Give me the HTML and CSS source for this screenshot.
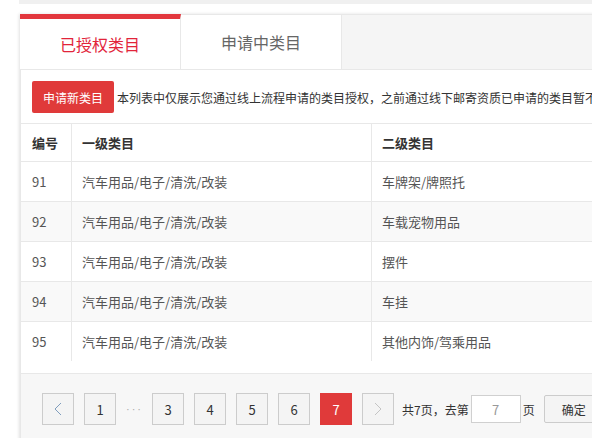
FILE: index.html
```html
<!DOCTYPE html>
<html lang="zh-CN">
<head>
<meta charset="utf-8">
<title>类目管理</title>
<link rel="stylesheet" href="styles.css">
</head>
<body>
<div class="topstrip"></div>
<div class="panel">
  <div class="tabs">
    <div class="tab tab-active">已授权类目</div>
    <div class="tab">申请中类目</div>
    <div class="tab-fill"></div>
  </div>
  <div class="content">
    <div class="toolbar">
      <button class="btn-primary">申请新类目</button>
      <span class="notice">本列表中仅展示您通过线上流程申请的类目授权，之前通过线下邮寄资质已申请的类目暂不在此列表中展示</span>
    </div>
    <table class="grid">
      <colgroup>
        <col class="c-num">
        <col class="c-first">
        <col class="c-second">
      </colgroup>
      <thead>
        <tr><th>编号</th><th>一级类目</th><th>二级类目</th></tr>
      </thead>
      <tbody>
        <tr><td>91</td><td>汽车用品/电子/清洗/改装</td><td>车牌架/牌照托</td></tr>
        <tr class="alt"><td>92</td><td>汽车用品/电子/清洗/改装</td><td>车载宠物用品</td></tr>
        <tr><td>93</td><td>汽车用品/电子/清洗/改装</td><td>摆件</td></tr>
        <tr class="alt"><td>94</td><td>汽车用品/电子/清洗/改装</td><td>车挂</td></tr>
        <tr class="last"><td>95</td><td>汽车用品/电子/清洗/改装</td><td>其他内饰/驾乘用品</td></tr>
      </tbody>
    </table>
    <div class="pager">
      <span class="pg pg-arrow"><svg width="8" height="14" viewBox="0 0 8 14"><path d="M7 1 L1 7 L7 13" fill="none" stroke="#7f9dbd" stroke-width="1"/></svg></span>
      <span class="pg">1</span>
      <span class="pg-dots">···</span>
      <span class="pg">3</span>
      <span class="pg">4</span>
      <span class="pg">5</span>
      <span class="pg">6</span>
      <span class="pg pg-cur">7</span>
      <span class="pg pg-arrow"><svg width="8" height="14" viewBox="0 0 8 14"><path d="M1 1 L7 7 L1 13" fill="none" stroke="#c4c4c4" stroke-width="1"/></svg></span>
      <span class="pg-text">共7页，去第</span>
      <span class="pg-input">7</span>
      <span class="pg-text pg-unit">页</span>
      <span class="pg-btn">确定</span>
    </div>
  </div>
</div>
</body>
</html>
```

FILE: styles.css
```css
html, body {
  margin: 0;
  padding: 0;
  background: #fff;
  overflow: hidden;
  font-family: "Microsoft YaHei", "Noto Sans CJK SC", "Noto Sans", sans-serif;
  color: #333;
}

.topstrip {
  margin-left: 19px;
  height: 4px;
  background: #f0f0f0;
}

.panel {
  margin: 10px 0 0 20px;
  width: 700px;
  box-shadow: -1px 0 3px rgba(0, 0, 0, 0.12);
  background: #fff;
}

.tabs {
  display: flex;
  height: 54px;
  border-top: 1px solid #e8e8e8;
  border-bottom: 1px solid #e8e8e8;
  background: #f5f5f5;
}

.tab {
  width: 160px;
  background: #fff;
  border-right: 1px solid #e8e8e8;
  display: flex;
  align-items: center;
  justify-content: center;
  font-size: 16px;
  color: #666;
}

.tab-active {
  margin-top: -1px;
  border-top: 5px solid #e2373d;
  color: #e2243a;
  height: 50px;
}

.tab-fill {
  flex: 1;
}

.content {
  border-left: 1px solid #e8e8e8;
}

.toolbar {
  display: flex;
  align-items: center;
  padding: 11px 0 10px 11px;
  white-space: nowrap;
  overflow: hidden;
}

.btn-primary {
  flex: none;
  height: 32px;
  width: 82px;
  border: none;
  border-radius: 2px;
  background: #e03a3a;
  color: #fff;
  font-family: inherit;
  font-size: 12px;
  padding: 0;
  margin: 0 3px 0 0;
}

.notice {
  font-size: 12px;
  color: #333;
}

.grid {
  border-collapse: separate;
  border-spacing: 0;
  table-layout: fixed;
  width: 679px;
  border-top: 1px solid #e8e8e8;
}

.c-num { width: 51px; }
.c-first { width: 300px; }

.grid th,
.grid td {
  text-align: left;
  font-size: 13px;
  padding: 0 0 0 10px;
  border-bottom: 1px solid #e8e8e8;
  white-space: nowrap;
}

.grid th:first-child,
.grid td:first-child {
  padding-left: 11px;
}

.grid th:nth-child(-n+2),
.grid td:nth-child(-n+2) {
  border-right: 1px solid #e8e8e8;
}

.grid th {
  height: 37px;
  font-weight: bold;
  color: #333;
}

.grid td {
  height: 39px;
  color: #555;
}

.grid tr.alt td {
  background: #f9f9f9;
}

.grid tr.last td {
  border-bottom: none;
}

.pager {
  margin-top: 12px;
  border-top: 1px solid #e8e8e8;
  background: #f7f7f7;
  padding: 15px 0 20px 21px;
  display: flex;
  align-items: center;
  height: 40px;
  white-space: nowrap;
}

.pg {
  flex: none;
  box-sizing: border-box;
  width: 32px;
  height: 32px;
  border: 1px solid #cccccc;
  background: #f4f4f4;
  display: flex;
  align-items: center;
  justify-content: center;
  font-size: 13px;
  color: #333;
  margin-right: 10px;
}

.pg-cur {
  background: #e03a3a;
  border-color: #e03a3a;
  color: #fff;
}

.pg-dots {
  flex: none;
  width: 16px;
  margin-right: 10px;
  font-family: "Liberation Sans", sans-serif;
  font-size: 11px;
  color: #aaa;
  letter-spacing: 2px;
  text-align: center;
  white-space: nowrap;
}

.pg-text {
  flex: none;
  font-size: 12px;
  color: #333;
  margin-left: -2px;
  margin-right: 2px;
}

.pg-input {
  flex: none;
  box-sizing: border-box;
  width: 50px;
  height: 28px;
  border: 1px solid #d0d0d0;
  background: #fff;
  display: flex;
  align-items: center;
  justify-content: center;
  font-size: 13px;
  color: #999;
}

.pg-unit {
  margin-left: 2px;
  margin-right: 9px;
}

.pg-btn {
  flex: none;
  box-sizing: border-box;
  width: 60px;
  height: 28px;
  border: 1px solid #cccccc;
  border-radius: 2px;
  background: #f4f4f4;
  display: flex;
  align-items: center;
  justify-content: center;
  font-size: 12px;
  color: #333;
}
```
